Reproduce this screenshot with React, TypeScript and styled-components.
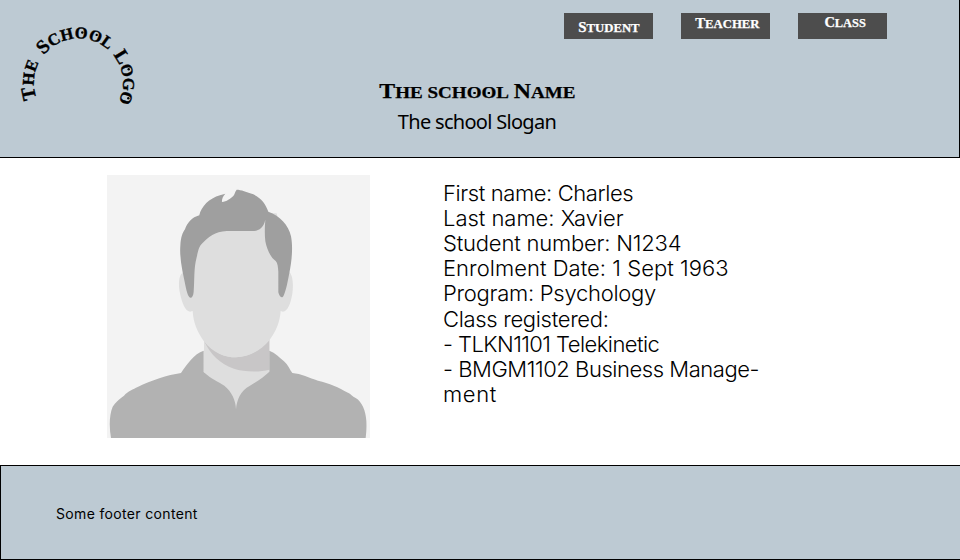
import React from "react";
import styled, { createGlobalStyle } from "styled-components";

const GlobalStyle = createGlobalStyle`
  * { box-sizing: border-box; }
  body { margin: 0; background: #fff; color: #000; }
`;

const Page = styled.div`
  display: grid;
  grid-template-rows: 158px 307px 95px;
  width: 960px;
  height: 560px;
  overflow: hidden;
`;

const Header = styled.header`
  display: grid;
  grid-template-columns: 160px 1fr;
  background: #bdcad3;
  border-right: 1px solid #000;
  border-bottom: 1px solid #000;
`;

const Logo = styled.svg`
  display: block;
  width: 160px;
  height: 150px;
  font-family: "Liberation Serif", serif;
  font-weight: 700;
`;

const LogoWord = styled.text<{ $track: number }>`
  font-size: 16.5px;
  letter-spacing: ${(p) => p.$track}px;
  stroke: #000;
  stroke-width: 0.4px;
`;

const LogoCapital = styled.tspan`
  font-size: 19.5px;
`;

const HeaderBody = styled.div`
  display: flex;
  flex-direction: column;
`;

const Nav = styled.nav`
  display: flex;
  justify-content: flex-end;
  gap: 28px;
  padding: 13px 72px 0 0;
`;

const NavButton = styled.a<{ $drop: number; $shift: number }>`
  display: flex;
  justify-content: center;
  width: 89px;
  height: 26px;
  padding-top: ${(p) => p.$drop}px;
  padding-left: ${(p) => p.$shift}px;
  background: #4d4d4d;
  color: #fff;
  text-decoration: none;
`;

const SmallCaps = styled.span<{ $size: number; $stretch: number }>`
  display: inline-flex;
  align-items: baseline;
  gap: 0.25em;
  font: 700 ${(p) => p.$size}px/16px "Liberation Serif", serif;
  text-transform: uppercase;
  white-space: nowrap;
  -webkit-text-stroke: 0.25px currentColor;
  transform: scaleX(${(p) => p.$stretch});
`;

const Word = styled.span<{ $capital?: number }>`
  display: inline-block;
  &::first-letter {
    font-size: ${(p) => p.$capital ?? 1}em;
  }
`;

const DottedLetter = styled.span`
  position: relative;
  &::after {
    content: "";
    position: absolute;
    left: calc(50% - 1px);
    top: calc(50% - 0.5px);
    width: 2px;
    height: 2px;
    background: currentColor;
  }
`;

const Titles = styled.div`
  display: flex;
  flex-direction: column;
  align-items: center;
  width: 634px;
  padding-top: 44px;
`;

const SchoolName = styled.h1`
  margin: 0;
  line-height: 16px;
  font-size: 16px;
`;

const Slogan = styled.p`
  margin: 7px 0 0;
  font: 400 20px/28px "Noto Sans", sans-serif;
  letter-spacing: -0.7px;
`;

const Main = styled.main`
  display: flex;
  align-items: flex-start;
  gap: 73px;
  padding: 17px 0 0 107px;
`;

const Portrait = styled.svg`
  display: block;
  width: 263px;
  height: 263px;
  background: #f3f3f3;
`;

const Details = styled.div`
  display: flex;
  flex-direction: column;
  padding-top: 5.6px;
`;

const Detail = styled.div<{ $track: number }>`
  font: 300 22px/25.2px Inter, sans-serif;
  letter-spacing: ${(p) => p.$track}px;
  white-space: nowrap;
`;

const Footer = styled.footer`
  display: flex;
  align-items: center;
  padding: 3px 0 0 55px;
  background: #bdcad3;
  border: 1px solid #000;
  border-right: 0;
  font: 400 14px/20px Inter, sans-serif;
  letter-spacing: 0.34px;
`;

const details = [
  { text: "First name: Charles", track: -0.4 },
  { text: "Last name: Xavier", track: -0.03 },
  { text: "Student number: N1234", track: -0.2 },
  { text: "Enrolment Date: 1 Sept 1963", track: 0.03 },
  { text: "Program: Psychology", track: -0.27 },
  { text: "Class registered:", track: -0.32 },
  { text: "- TLKN1101 Telekinetic", track: -0.56 },
  { text: "- BMGM1102 Business Manage-", track: -0.45 },
  { text: "ment", track: 0.6 },
];

const links = [
  { text: "Student", drop: 6, shift: 0, stretch: 1.06 },
  { text: "Teacher", drop: 2, shift: 3, stretch: 1.06 },
  { text: "Class", drop: 1, shift: 5, stretch: 1.03 },
];

const logoWords = [
  { capital: "T", rest: "HE", offset: 3.5, track: 0.2 },
  { capital: "S", rest: "CHOOL", offset: 49.4, track: 0.1 },
  { capital: "L", rest: "OGO", offset: 128.5, track: -0.3 },
];

const logoDots = [
  [82.3, 32.5],
  [96.7, 34.9],
  [128.7, 69.3],
  [128.3, 98.3],
];

function SchoolLogo() {
  return (
    <Logo viewBox="0 0 160 150" aria-label="The School Logo">
      <path id="arch" d="M38.2 101.8 A44.5 44.5 0 1 1 114.9 108.5" fill="none" />
      {logoWords.map((w) => (
        <LogoWord key={w.capital} $track={w.track}>
          <textPath href="#arch" startOffset={w.offset}>
            <LogoCapital>{w.capital}</LogoCapital>
            {w.rest}
          </textPath>
        </LogoWord>
      ))}
      {logoDots.map(([x, y]) => (
        <circle key={x} cx={x} cy={y} r="1.2" />
      ))}
    </Logo>
  );
}

function StudentPortrait() {
  return (
    <Portrait viewBox="21 15 789 789" aria-label="Student portrait">
      <path
        fill="#dedede"
        d="M312 500V606L345 650L408 720L470 650L508 606V500Z"
      />
      <path
        fill="#c8c6c7"
        d="M312 512C345 550 375 562 408 562C445 561 484 540 508 508V599C480 607 430 606 402 596C360 582 330 552 312 512Z"
      />
      <path
        fill="#dedede"
        d="M248 308C235 316 235 349 240 370C246 400 256 424 270 425L278 423C280 459 292 485 311 513C340 550 374 562 408 562C444 562 482 542 507 512C528 485 540 455 542 423L549 425C563 423 572 401 577 371C581 343 578 315 568 306L530 130H300Z"
      />
      <path
        fill="#9f9f9f"
        d="M272 383C265 382 261 368 257 350C249 310 238 268 241 227C242 202 248 187 255 178C262 158 276 142 298 136C303 110 328 85 360 76L376 71C369 79 365 87 366 96C380 95 391 86 400 78C405 72 405 64 410 59C422 59 441 66 460 73C484 84 497 102 505 125C540 138 566 165 573 199C579 230 576 270 568 309C562 342 556 370 549 380C543 385 538 379 535 367V305C534 290 533 279 527 273C510 261 500 235 496 214C493 187 495 164 496 149C490 174 477 183 457 183H380C344 185 326 201 307 220C296 229 294 246 290 262C281 295 284 330 281 365C280 377 276 383 272 383Z"
      />
      <path
        fill="#b2b2b2"
        d="M33 804C27 771 28 733 38 710C47 697 55 690 64 683L72 677C84 663 100 658 113 651C154 631 202 615 243 609C260 584 282 551 311 542V606C335 628 354 635 373 647C396 666 407 691 408 718C410 691 421 662 450 647C474 632 492 621 508 605V542C526 549 539 562 552 574C564 584 569 599 577 609C603 611 628 624 654 632C688 639 716 653 744 668C752 671 757 679 767 684C786 695 797 722 799 752C800 772 799 788 797 804Z"
      />
    </Portrait>
  );
}

export default function App() {
  return (
    <>
      <GlobalStyle />
      <Page>
        <Header>
          <SchoolLogo />
          <HeaderBody>
            <Nav>
              {links.map((l) => (
                <NavButton key={l.text} $drop={l.drop} $shift={l.shift}>
                  <SmallCaps $size={12} $stretch={l.stretch}>
                    <Word $capital={1.17}>{l.text}</Word>
                  </SmallCaps>
                </NavButton>
              ))}
            </Nav>
            <Titles>
              <SchoolName>
                <SmallCaps $size={16} $stretch={1.19}>
                  <Word $capital={1.25}>The</Word>
                  <Word>
                    sch<DottedLetter>o</DottedLetter>
                    <DottedLetter>o</DottedLetter>l
                  </Word>
                  <Word $capital={1.25}>Name</Word>
                </SmallCaps>
              </SchoolName>
              <Slogan>The school Slogan</Slogan>
            </Titles>
          </HeaderBody>
        </Header>
        <Main>
          <StudentPortrait />
          <Details>
            {details.map((d) => (
              <Detail key={d.text} $track={d.track}>
                {d.text}
              </Detail>
            ))}
          </Details>
        </Main>
        <Footer>Some footer content</Footer>
      </Page>
    </>
  );
}
